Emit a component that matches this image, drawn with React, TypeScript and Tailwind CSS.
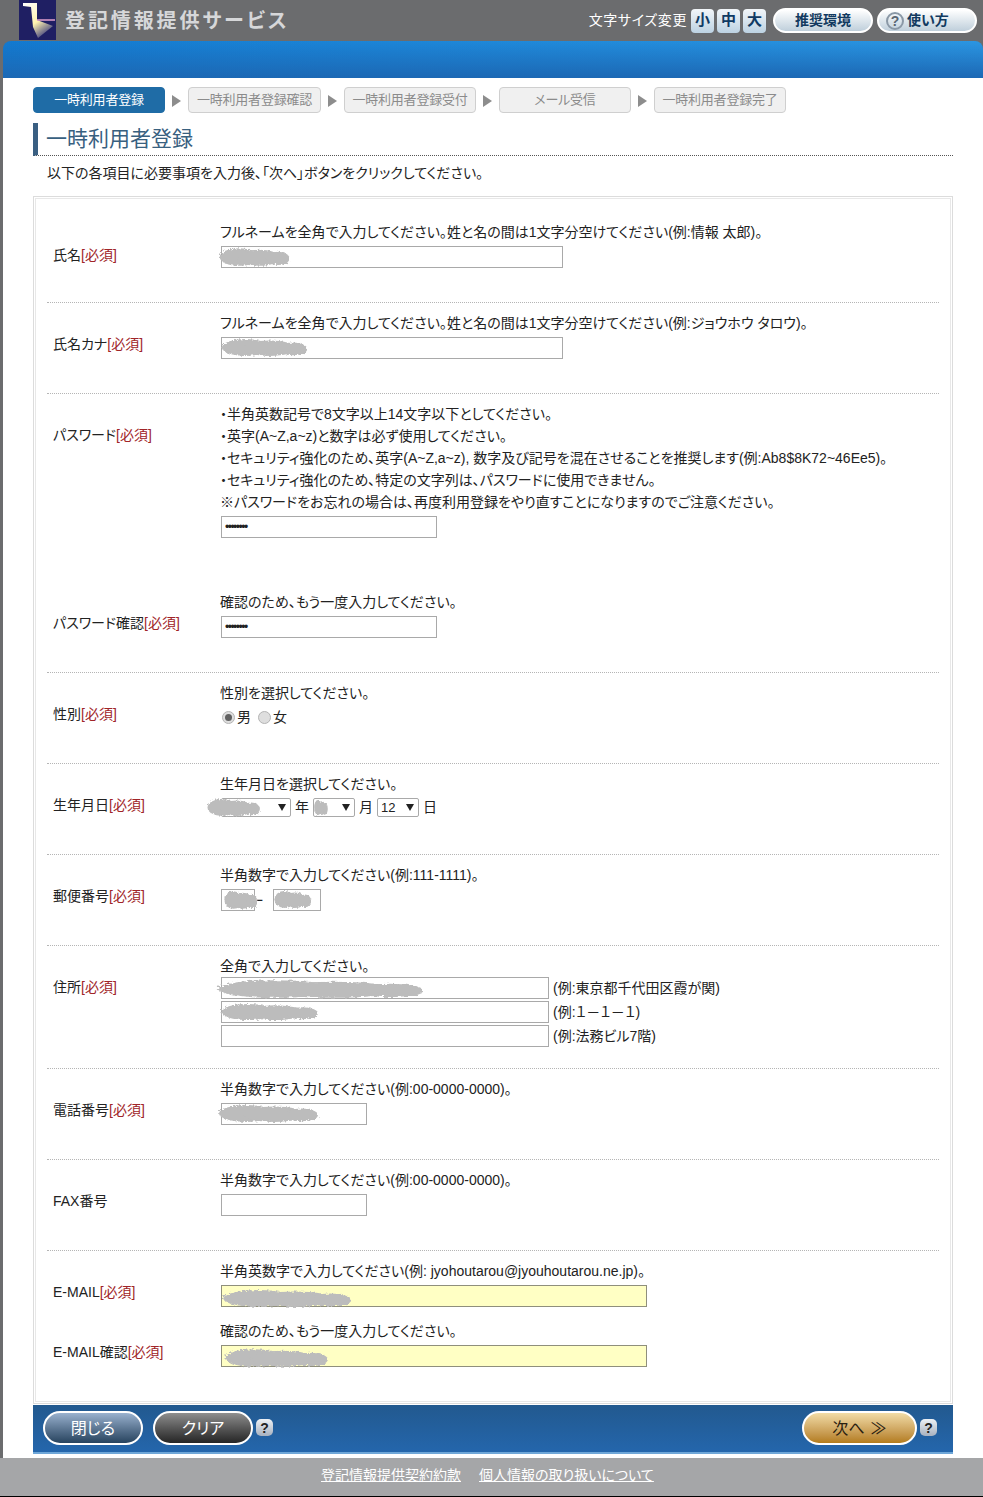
import React from "react";

const JP = "font-['Liberation_Sans','Noto_Sans_CJK_JP',sans-serif] [font-feature-settings:'palt']";

function Blob({ className }: { className: string }) {
  return (
    <svg className={`absolute pointer-events-none ${className}`} viewBox="0 0 100 30" preserveAspectRatio="none" aria-hidden="true">
      <g fill="#bcbcbc" filter="url(#rough)">
        <ellipse cx="28" cy="15" rx="27" ry="12" />
        <ellipse cx="55" cy="16" rx="30" ry="11" />
        <ellipse cx="82" cy="17" rx="16" ry="9" />
      </g>
    </svg>
  );
}

function Hint({ children }: { children: React.ReactNode }) {
  return <div className="h-[22px] -ml-px leading-[22px] whitespace-nowrap tracking-[0px]">{children}</div>;
}

function Box({ className, value, children, yellow }: { className: string; value?: string; children?: React.ReactNode; yellow?: boolean }) {
  return (
    <div className={`relative h-[22px] ${className}`}>
      <input
        readOnly
        value={value ?? ""}
        className={`block w-full h-full px-[3px] text-[12px] tracking-[-1.500px] leading-none border outline-none ${yellow ? "bg-[#ffffc4] border-[#8f8f7c]" : "bg-white border-[#a9a9a9]"}`}
      />
      {children}
    </div>
  );
}

function Req() {
  return <span className="text-[#a02428]">[必須]</span>;
}

function Label({ text, req = true, className = "pt-[30px]" }: { text: string; req?: boolean; className?: string }) {
  return (
    <div className={`w-[174px] shrink-0 pl-[6px] whitespace-nowrap leading-[22px] ${className}`}>
      {text}
      {req && <Req />}
    </div>
  );
}

function Row({ className, children, last }: { className: string; children: React.ReactNode; last?: boolean }) {
  return <div className={`flex mx-[11px] ${last ? "" : "border-b border-dotted border-[#b5b5b5]"} ${className}`}>{children}</div>;
}

function Sel({ className, value, children }: { className: string; value?: string; children?: React.ReactNode }) {
  return (
    <div className={`relative h-[19px] ${className}`}>
      <select
        defaultValue={value}
        className="block w-full h-full appearance-none bg-white border border-[#a9a9a9] rounded-[2px] pl-[3px] text-[13px] leading-none"
      >
        <option>{value}</option>
      </select>
      <svg className="absolute right-[5px] top-[6px] w-[8px] h-[7px]" viewBox="0 0 8 7" aria-hidden="true">
        <path d="M0 0h8L4 7z" fill="#222" />
      </svg>
      {children}
    </div>
  );
}

function Radio({ on }: { on?: boolean }) {
  return (
    <span className="w-[13px] h-[13px] rounded-full border border-[#b4b4b4] bg-[#dedede] flex items-center justify-center">
      {on && <span className="w-[7px] h-[7px] rounded-full bg-[#606060]" />}
    </span>
  );
}

function Help() {
  return (
    <span className="w-[17px] h-[17px] rounded-[5px] bg-gradient-to-b from-[#eef1f5] to-[#a7b1bf] text-[#222] flex items-center justify-center text-[14px] font-bold leading-none font-['Liberation_Sans',sans-serif]">
      ?
    </span>
  );
}

function Step({ children, active, width = "w-[133px]" }: { children: React.ReactNode; active?: boolean; width?: string }) {
  return (
    <div
      className={`h-[26px] ${width} rounded-[4px] flex items-center justify-center text-[13px] tracking-[-0.2px] whitespace-nowrap border ${
        active ? "bg-[#1f6ca6] border-[#1f6ca6] text-white" : "bg-[#f0f0f0] border-[#cfcfcf] text-[#8b8b8b]"
      }`}
    >
      {children}
    </div>
  );
}

function Arrow() {
  return (
    <svg className="w-[9px] h-[12px] mx-[7px] mt-[1px] shrink-0" viewBox="0 0 9 12" aria-hidden="true">
      <path d="M0 0l9 6-9 6z" fill="#8d8d8d" />
    </svg>
  );
}

function Pill({ children, className }: { children: React.ReactNode; className: string }) {
  return (
    <button type="button" className={`h-[34px] pt-[2px] rounded-full border-2 border-white flex items-center justify-center text-[16px] ${className}`}>
      {children}
    </button>
  );
}

function TopPill({ children, className }: { children: React.ReactNode; className: string }) {
  return (
    <div className={`h-[25px] rounded-full border-[2px] border-white bg-gradient-to-b from-[#ffffff] to-[#bfcfdb] text-[#123a60] text-[14px] font-bold flex items-center ${className}`}>
      {children}
    </div>
  );
}

function SizeBtn({ children }: { children: React.ReactNode }) {
  return (
    <div className="w-[23px] h-[24px] rounded-[4px] bg-gradient-to-b from-[#f2f6f9] to-[#bcd2e2] text-[#0f3a63] text-[15px] font-bold flex items-center justify-center">
      {children}
    </div>
  );
}

export default function App() {
  return (
    <div className={`w-[983px] bg-[#a5a6a8] text-[14px] text-[#222] ${JP}`}>
      <svg width="0" height="0" className="absolute" aria-hidden="true">
        <filter id="rough">
          <feTurbulence type="fractalNoise" baseFrequency="0.35" numOctaves="2" seed="4" />
          <feDisplacementMap in="SourceGraphic" scale="7" />
        </filter>
      </svg>

      <div className="bg-[#6b6c6e] pl-[3px]">
        <header className="h-[41px] flex items-start">
          <svg className="ml-[16px] w-[37px] h-[40px] shrink-0" viewBox="0 0 37 40" aria-hidden="true">
            <defs>
              <linearGradient id="lg" x1="0" y1="0" x2="0.6" y2="1">
                <stop offset="0" stopColor="#ffffff" />
                <stop offset="0.6" stopColor="#fff3b0" />
                <stop offset="1" stopColor="#4a4a80" />
              </linearGradient>
            </defs>
            <rect width="37" height="40" fill="#1f1f63" />
            <path d="M4 3h14v17l16 6-15 12-5-11-2-20-8-1z" fill="url(#lg)" />
            <path d="M18 20h18" stroke="#e2a0cc" strokeWidth="1.500" />
          </svg>
          <div className="ml-[9px] mt-[8px] text-[20px] leading-[26px] font-bold text-[#d6d7d9] tracking-[2.900px] whitespace-nowrap">登記情報提供サービス</div>
          <div className="ml-auto mr-[6px] mt-[8px] flex items-center">
            <span className="text-white text-[14px] tracking-[0.6px] mr-[4px] whitespace-nowrap">文字サイズ変更</span>
            <div className="flex gap-[3px]">
              <SizeBtn>小</SizeBtn>
              <SizeBtn>中</SizeBtn>
              <SizeBtn>大</SizeBtn>
            </div>
            <TopPill className="w-[100px] ml-[7px] justify-center">推奨環境</TopPill>
            <TopPill className="w-[100px] ml-[4px] pl-[7px] gap-[3px]">
              <span className="w-[18px] h-[18px] rounded-full border-[2px] border-[#8a98a6] text-[14px] leading-[14px] text-center font-bold text-[#5a6672] font-['Liberation_Sans',sans-serif]">?</span>
              使い方
            </TopPill>
          </div>
        </header>

        <div className="h-[37px] rounded-t-[8px] bg-[linear-gradient(to_bottom,rgba(28,104,180,0)_0%,#1c68b4_100%),linear-gradient(to_right,#127ad0,#2b96e2)]" />

        <main className="bg-white pl-[30px] pb-[4px]">
          <nav className="pt-[9px] flex items-center">
            <Step active width="w-[132px]">一時利用者登録</Step>
            <Arrow />
            <Step>一時利用者登録確認</Step>
            <Arrow />
            <Step width="w-[132px]">一時利用者登録受付</Step>
            <Arrow />
            <Step width="w-[132px]">メール受信</Step>
            <Arrow />
            <Step width="w-[132px]">一時利用者登録完了</Step>
          </nav>

          <h1 className="mt-[10px] w-[920px] h-[33px] border-l-[5px] border-l-[#3a5f82] border-b border-b-[#555] border-dotted pl-[8px] text-[21px] leading-[31px] text-[#38607f] font-normal [border-left-style:solid]">
            一時利用者登録
          </h1>
          <p className="pl-[14px] h-[40px] pt-[6px] leading-[22px]">以下の各項目に必要事項を入力後、「次へ」ボタンをクリックしてください。</p>

          <form className="w-[920px] h-[1208px] border border-[#dcdcdc] p-px bg-white">
            <div className="h-full border border-[#e8e8e8]">
              <Row className="h-[104px]">
                <Label text="氏名" className="pt-[45px]" />
                <div className="pt-[22px]">
                  <Hint>フルネームを全角で入力してください。姓と名の間は1文字分空けてください(例:情報 太郎)。</Hint>
                  <Box className="w-[342px] mt-[3px]">
                    <Blob className="left-[-2px] top-0 w-[72px] h-[22px]" />
                  </Box>
                </div>
              </Row>
              <Row className="h-[91px]">
                <Label text="氏名カナ" />
                <div className="pt-[9px]">
                  <Hint>フルネームを全角で入力してください。姓と名の間は1文字分空けてください(例:ジョウホウ タロウ)。</Hint>
                  <Box className="w-[342px] mt-[3px]">
                    <Blob className="left-0 top-0 w-[88px] h-[21px]" />
                  </Box>
                </div>
              </Row>
              <Row className="h-[279px] relative">
                <div className="w-[174px] shrink-0">
                  <Label text="パスワード" />
                  <Label text="パスワード確認" className="pt-[166px]" />
                </div>
                <div className="pt-[9px]">
                  <Hint>・半角英数記号で8文字以上14文字以下としてください。</Hint>
                  <Hint>・英字(A~Z,a~z)と数字は必ず使用してください。</Hint>
                  <Hint>・セキュリティ強化のため、英字(A~Z,a~z), 数字及び記号を混在させることを推奨します(例:Ab8$8K72~46Ee5)。</Hint>
                  <Hint>・セキュリティ強化のため、特定の文字列は、パスワードに使用できません。</Hint>
                  <Hint>※パスワードをお忘れの場合は、再度利用登録をやり直すことになりますのでご注意ください。</Hint>
                  <Box className="w-[216px] mt-[3px]" value="••••••••" />
                  <div className="mt-[53px]">
                    <Hint>確認のため、もう一度入力してください。</Hint>
                    <Box className="w-[216px] mt-[3px]" value="••••••••" />
                  </div>
                </div>
              </Row>
              <Row className="h-[91px]">
                <Label text="性別" />
                <div className="pt-[9px]">
                  <Hint>性別を選択してください。</Hint>
                  <div className="mt-[1px] h-[24px] flex items-center pl-px">
                    <Radio on />
                    <span className="ml-[2px] mr-[7px]">男</span>
                    <Radio />
                    <span className="ml-[2px]">女</span>
                  </div>
                </div>
              </Row>
              <Row className="h-[91px]">
                <Label text="生年月日" />
                <div className="pt-[9px]">
                  <Hint>生年月日を選択してください。</Hint>
                  <div className="flex items-center mt-[2px]">
                    <Sel className="w-[70px]" value="">
                      <Blob className="left-[-14px] top-[-1px] w-[54px] h-[21px]" />
                    </Sel>
                    <span className="w-[22px] text-center">年</span>
                    <Sel className="w-[42px]" value="">
                      <Blob className="left-[1px] top-0 w-[14px] h-[19px]" />
                    </Sel>
                    <span className="w-[22px] text-center">月</span>
                    <Sel className="w-[42px]" value="12" />
                    <span className="w-[22px] text-center">日</span>
                  </div>
                </div>
              </Row>
              <Row className="h-[91px]">
                <Label text="郵便番号" />
                <div className="pt-[9px]">
                  <Hint>半角数字で入力してください(例:111-1111)。</Hint>
                  <div className="mt-[3px] flex items-center">
                    <Box className="w-[34px]">
                      <Blob className="left-[3px] top-0 w-[34px] h-[22px]" />
                    </Box>
                    <span className="w-[18px] pl-[1px]">ｰ</span>
                    <Box className="w-[48px]">
                      <Blob className="left-[1px] top-0 w-[38px] h-[21px]" />
                    </Box>
                  </div>
                </div>
              </Row>
              <Row className="h-[123px]">
                <Label text="住所" />
                <div className="pt-[9px]">
                  <Hint>全角で入力してください。</Hint>
                  <div className="flex items-center">
                    <Box className="w-[328px]">
                      <Blob className="left-[-5px] top-[1px] w-[212px] h-[22px]" />
                    </Box>
                    <span className="ml-[4px]">(例:東京都千代田区霞が関)</span>
                  </div>
                  <div className="flex items-center mt-[2px]">
                    <Box className="w-[328px]">
                      <Blob className="left-[-1px] top-[1px] w-[100px] h-[20px]" />
                    </Box>
                    <span className="ml-[4px]">(例:１－１－１)</span>
                  </div>
                  <div className="flex items-center mt-[2px]">
                    <Box className="w-[328px]" />
                    <span className="ml-[4px]">(例:法務ビル7階)</span>
                  </div>
                </div>
              </Row>
              <Row className="h-[91px]">
                <Label text="電話番号" />
                <div className="pt-[9px]">
                  <Hint>半角数字で入力してください(例:00-0000-0000)。</Hint>
                  <Box className="w-[146px] mt-[3px]">
                    <Blob className="left-[-3px] top-0 w-[102px] h-[21px]" />
                  </Box>
                </div>
              </Row>
              <Row className="h-[91px]">
                <Label text="FAX番号" req={false} />
                <div className="pt-[9px]">
                  <Hint>半角数字で入力してください(例:00-0000-0000)。</Hint>
                  <Box className="w-[146px] mt-[3px]" />
                </div>
              </Row>
              <Row className="h-[152px]" last>
                <div className="w-[174px] shrink-0">
                  <Label text="E-MAIL" />
                  <Label text="E-MAIL確認" className="pt-[38px]" />
                </div>
                <div className="pt-[9px]">
                  <Hint>半角英数字で入力してください(例: jyohoutarou@jyouhoutarou.ne.jp)。</Hint>
                  <Box className="w-[426px] mt-[3px]" yellow>
                    <Blob className="left-[1px] top-[3px] w-[132px] h-[21px]" />
                  </Box>
                  <div className="mt-[13px]">
                    <Hint>確認のため、もう一度入力してください。</Hint>
                    <Box className="w-[426px] mt-[3px]" yellow>
                      <Blob className="left-[3px] top-[2px] w-[106px] h-[22px]" />
                    </Box>
                  </div>
                </div>
              </Row>
            </div>
          </form>

          <div className="mt-px w-[920px] h-[49px] bg-gradient-to-b from-[#22598f] to-[#2466ac] border-b-[2px] border-b-[#6fa7d8] flex items-center pl-[10px] pb-[2px]">
            <Pill className="w-[100px] text-white bg-gradient-to-b from-[#9ab2cf] to-[#28445f]">閉じる</Pill>
            <Pill className="w-[100px] ml-[10px] text-white bg-gradient-to-b from-[#8f8f8f] to-[#262626]">クリア</Pill>
            <span className="ml-[3px]"><Help /></span>
            <Pill className="w-[115px] ml-auto text-[#2a2010] bg-gradient-to-b from-[#f1dca6] to-[#b37c1a] gap-[6px]">
              <span>次へ</span>
              <span>≫</span>
            </Pill>
            <span className="ml-[3px] mr-[16px]"><Help /></span>
          </div>
        </main>
      </div>

      <footer className="h-[38px] flex items-center pb-[4px] pl-[321px] gap-[18px] text-[14px] text-white underline">
        <a>登記情報提供契約約款</a>
        <a>個人情報の取り扱いについて</a>
      </footer>
      <div className="h-[2px] bg-black" />
    </div>
  );
}
